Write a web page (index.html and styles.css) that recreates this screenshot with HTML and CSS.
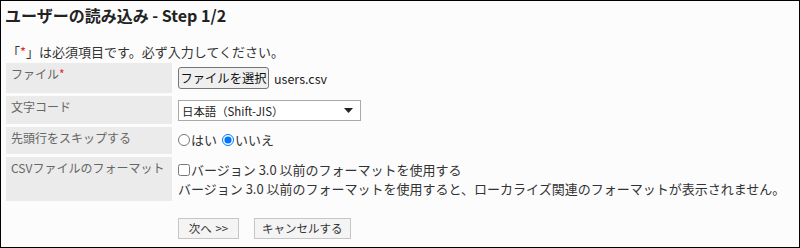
FILE: index.html
```html
<!DOCTYPE html>
<html lang="ja">
<head>
<meta charset="utf-8">
<title>ユーザーの読み込み - Step 1/2</title>
<link rel="stylesheet" href="styles.css">
</head>
<body>
<div class="page">
  <h1 class="title">ユーザーの読み込み - Step 1/2</h1>
  <p class="notice">「<span class="req">*</span>」は必須項目です。必ず入力してください。</p>
  <div class="form">
    <div class="label">ファイル<span class="req">*</span></div>
    <div class="value row-file">
      <button class="file-btn" type="button">ファイルを選択</button><span class="file-name">users.csv</span>
    </div>

    <div class="label">文字コード</div>
    <div class="value row-select">
      <span class="select-wrap">
        <select class="select"><option>日本語（Shift-JIS）</option></select>
        <svg class="select-arrow" width="9" height="5" viewBox="0 0 9 5"><path d="M0 0H9L4.5 5Z" fill="#222"/></svg>
      </span>
    </div>

    <div class="label">先頭行をスキップする</div>
    <div class="value row-radio">
      <label class="opt"><input type="radio" name="skip" class="radio">はい</label>
      <label class="opt"><input type="radio" name="skip" class="radio" checked>いいえ</label>
    </div>

    <div class="label">CSVファイルのフォーマット</div>
    <div class="value row-check">
      <label class="opt"><input type="checkbox" class="check">バージョン 3.0 以前のフォーマットを使用する</label>
      <div>バージョン 3.0 以前のフォーマットを使用すると、ローカライズ関連のフォーマットが表示されません。</div>
    </div>
  </div>
  <div class="actions">
    <button class="btn btn-next" type="button">次へ &gt;&gt;</button>
    <button class="btn" type="button">キャンセルする</button>
  </div>
</div>
</body>
</html>
```
FILE: styles.css
```css
html, body {
  margin: 0;
  padding: 0;
  background: #fcfcfc;
}
body {
  font-family: "Noto Sans CJK JP", "Noto Sans", sans-serif;
  font-size: 13px;
  color: #333;
}
.page {
  width: 800px;
  height: 248px;
  box-sizing: border-box;
  border: 1px solid #000;
  overflow: hidden;
}
.title {
  margin: 3px 0 0 4px;
  font-size: 16px;
  line-height: 23px;
  font-weight: bold;
  color: #222;
}
.notice {
  margin: 15px 0 0 6px;
  line-height: 19px;
}
.req {
  color: #e0282e;
}
.form {
  margin: 2px 0 0 5px;
  display: grid;
  grid-template-columns: 166px 1fr;
  column-gap: 6px;
  row-gap: 3px;
}
.label {
  background: #ebebeb;
  color: #666;
  padding: 2px 5px 0;
  font-size: 12px;
  line-height: 18px;
  white-space: nowrap;
}
.value {
  line-height: 19px;
  display: flex;
  align-items: flex-start;
}
.row-file { padding: 4px 0 4px; align-items: center; }
.row-select { padding: 4px 0 3px; }
.row-radio { padding: 3px 0 5px; }
.row-check { padding: 3px 0 3px; flex-direction: column; }

.file-btn {
  height: 22px;
  width: 91px;
  padding: 0;
  font-family: inherit;
  font-size: 12.3px;
  color: #111;
  background: #efefef;
  border: 1px solid #767676;
  border-radius: 3px;
}
.file-name {
  margin-left: 5px;
  font-size: 12.5px;
  color: #222;
}
.select-wrap {
  position: relative;
  display: inline-block;
}
.select {
  appearance: none;
  -webkit-appearance: none;
  width: 183px;
  height: 21px;
  margin: 0;
  padding: 0 0 0 3px;
  font-family: inherit;
  font-size: 11.4px;
  color: #222;
  background: #fff;
  border: 1px solid #a9a9a9;
  border-radius: 0;
}
.select-arrow {
  position: absolute;
  right: 8px;
  top: 8px;
}
.opt {
  display: inline-flex;
  align-items: center;
  margin-right: 5px;
}
.radio {
  width: 12px;
  height: 12px;
  margin: 0 1px 0 0;
}
.check {
  width: 12px;
  height: 12px;
  margin: 1px 1px 0 0;
}
.actions {
  margin: 17px 0 0 177px;
  display: flex;
  gap: 15px;
}
.btn {
  height: 21px;
  padding: 0 7px;
  font-family: inherit;
  font-size: 11.5px;
  line-height: 19px;
  color: #333;
  background: #f4f4f4;
  border: 1px solid #c6c6c6;
  border-radius: 0;
}
.btn-next {
  min-width: 61px;
  word-spacing: 1px;
}
```
